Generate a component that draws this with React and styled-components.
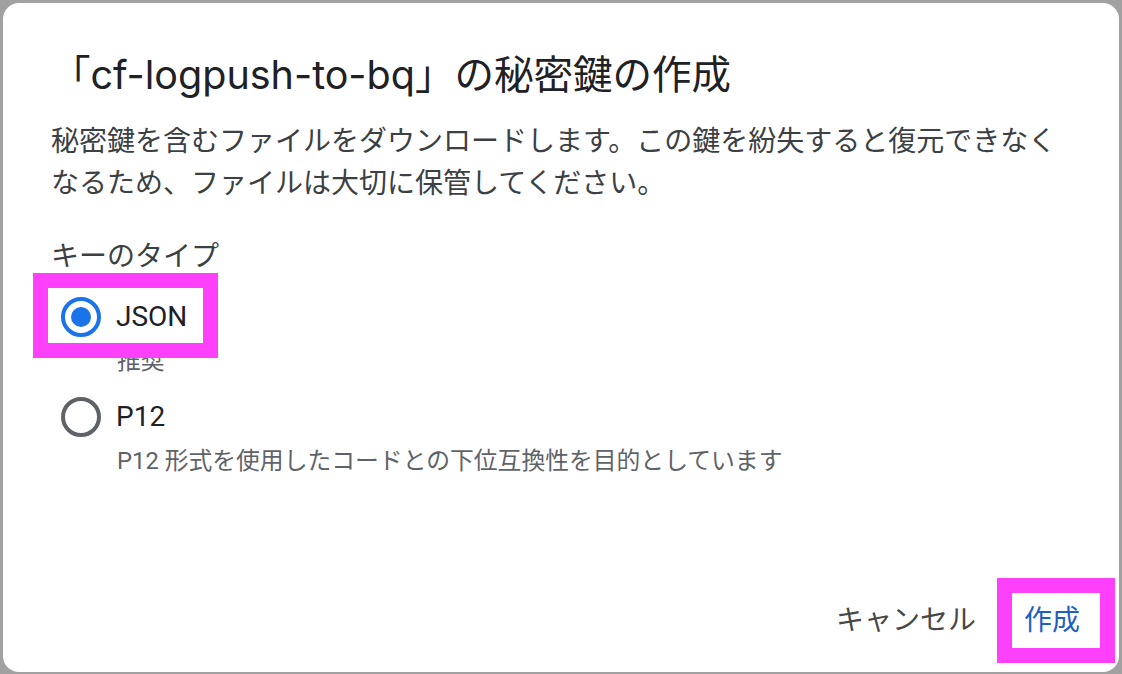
import React from "react";
import styled, { createGlobalStyle } from "styled-components";

const GlobalStyle = createGlobalStyle`
  html, body {
    margin: 0;
    padding: 0;
    width: 1122px;
    height: 674px;
    overflow: hidden;
    background: #a1a1a1;
  }
  #root { width: 1122px; height: 674px; }
  * { box-sizing: border-box; }
`;

const Backdrop = styled.div`
  width: 1122px;
  height: 674px;
  padding: 3px 3px 2px 3px;
  background: #a1a1a1;
  display: flex;
`;

const Dialog = styled.div`
  position: relative;
  flex: 1;
  background: #ffffff;
  border-radius: 16px;
  display: flex;
  flex-direction: column;
  font-family: "Roboto", "Noto Sans CJK JP", sans-serif;
`;

const Content = styled.div`
  padding: 46px 50px 0 48px;
  display: flex;
  flex-direction: column;
`;

const Title = styled.h1`
  margin: 0;
  font-family: "Inter", "Noto Sans CJK JP", sans-serif;
  font-weight: 400;
  font-size: 39.5px;
  line-height: 52px;
  color: #202124;
  white-space: nowrap;
`;

const Body = styled.p`
  margin: 20px 0 0 0;
  font-size: 28px;
  line-height: 42px;
  color: #3c4043;
`;

const Label = styled.div`
  margin-top: 31px;
  font-size: 28px;
  line-height: 42px;
  color: #3c4043;
`;

const Options = styled.div`
  display: flex;
  flex-direction: column;
  margin-top: 15px;
`;

const Option = styled.div`
  display: flex;
  flex-direction: column;
  align-items: flex-start;
  & + & {
    margin-top: 16px;
  }
`;

const Annotated = styled.div`
  position: relative;
  display: inline-flex;
`;

const Highlight = styled.div`
  position: absolute;
  top: ${(p) => p.$t}px;
  left: ${(p) => p.$l}px;
  right: ${(p) => p.$r}px;
  bottom: ${(p) => p.$b}px;
  border: 15px solid #ff40fa;
  pointer-events: none;
  z-index: 2;
`;

const Row = styled.label`
  display: inline-flex;
  align-items: center;
  height: 48px;
  padding-left: 10px;
  gap: 15px;
  cursor: pointer;
`;

const Ring = styled.span`
  width: 40px;
  height: 40px;
  border-radius: 50%;
  border: 4px solid ${(p) => (p.$checked ? "#1a73e8" : "#5f6368")};
  display: flex;
  align-items: center;
  justify-content: center;
  flex: none;
`;

const Dot = styled.span`
  width: 20px;
  height: 20px;
  border-radius: 50%;
  background: #1a73e8;
`;

const OptionName = styled.span`
  font-size: 28px;
  line-height: 42px;
  color: #202124;
`;

const Hint = styled.div`
  margin-top: 4px;
  padding-left: 66px;
  font-size: 23.8px;
  line-height: 32px;
  color: #5f6368;
`;

const Footer = styled.div`
  margin-top: auto;
  display: flex;
  justify-content: flex-end;
  align-items: center;
  gap: 24px;
  padding: 0 27px 23px 0;
`;

const TextButton = styled.button`
  position: relative;
  height: 56px;
  padding: 0 12px;
  border: none;
  background: transparent;
  font-family: "Roboto", "Noto Sans CJK JP", sans-serif;
  font-size: 28px;
  line-height: 56px;
  color: ${(p) => (p.$primary ? "#1f5fc0" : "#474747")};
  cursor: pointer;
`;

function Radio({ checked, name }) {
  return (
    <Row>
      <Ring $checked={checked}>{checked && <Dot />}</Ring>
      <OptionName>{name}</OptionName>
    </Row>
  );
}

export default function App() {
  return (
    <>
      <GlobalStyle />
      <Backdrop>
        <Dialog role="dialog">
          <Content>
            <Title>「cf-logpush-to-bq」の秘密鍵の作成</Title>
            <Body>
              秘密鍵を含むファイルをダウンロードします。この鍵を紛失すると復元できなくなるため、ファイルは大切に保管してください。
            </Body>
            <Label>キーのタイプ</Label>
            <Options>
              <Option>
                <Annotated>
                  <Radio checked name="JSON" />
                  <Highlight $t={-20} $l={-18} $r={-31} $b={-17} />
                </Annotated>
                <Hint>推奨</Hint>
              </Option>
              <Option>
                <Radio name="P12" />
                <Hint>P12 形式を使用したコードとの下位互換性を目的としています</Hint>
              </Option>
            </Options>
          </Content>
          <Footer>
            <TextButton>キャンセル</TextButton>
            <TextButton $primary>
              作成
              <Highlight $t={-15} $l={-15} $r={-23} $b={-14} />
            </TextButton>
          </Footer>
        </Dialog>
      </Backdrop>
    </>
  );
}
